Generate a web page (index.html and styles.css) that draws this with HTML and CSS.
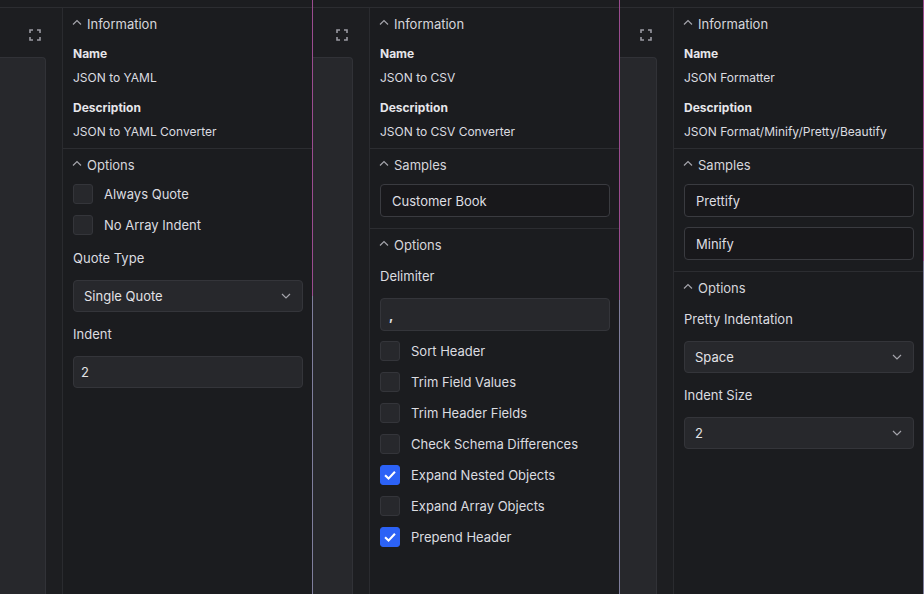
FILE: index.html
```html
<!DOCTYPE html>
<html lang="en">
<head>
<meta charset="utf-8">
<title>Tools</title>
<link rel="stylesheet" href="styles.css">
</head>
<body>
<div class="app">

  <!-- Panel 1: JSON to YAML -->
  <section class="panel panel-a">
    <div class="panel-main">
      <div class="strip"></div>
      <div class="panel-body">
        <div class="workspace">
          <div class="toolbar">
            <svg class="expand" viewBox="0 0 12 12"><path d="M1 4V1H4M8 1H11V4M11 8V11H8M4 11H1V8"/></svg>
          </div>
          <div class="editor"></div>
        </div>
        <aside class="sidebar">
          <div class="section info">
            <div class="section-head"><svg class="caret" viewBox="0 0 10 10"><path d="M1 6.5L5 2.5L9 6.5"/></svg><span>Information</span></div>
            <div class="info-list">
              <div class="info-item"><div class="info-label">Name</div><div class="info-value">JSON to YAML</div></div>
              <div class="info-item"><div class="info-label">Description</div><div class="info-value">JSON to YAML Converter</div></div>
            </div>
          </div>
          <div class="section">
            <div class="section-head"><svg class="caret" viewBox="0 0 10 10"><path d="M1 6.5L5 2.5L9 6.5"/></svg><span>Options</span></div>
            <div class="options">
              <label class="check"><span class="box"></span><span>Always Quote</span></label>
              <label class="check"><span class="box"></span><span>No Array Indent</span></label>
              <div class="field-label">Quote Type</div>
              <div class="select"><span>Single Quote</span><svg class="chev" viewBox="0 0 10 6"><path d="M1 1L5 5L9 1"/></svg></div>
              <div class="field-label">Indent</div>
              <div class="input">2</div>
            </div>
          </div>
        </aside>
      </div>
    </div>
    <div class="scroll" style="--thumb: 296px"></div>
  </section>

  <!-- Panel 2: JSON to CSV -->
  <section class="panel panel-b">
    <div class="panel-main">
      <div class="strip"></div>
      <div class="panel-body">
        <div class="workspace">
          <div class="toolbar">
            <svg class="expand" viewBox="0 0 12 12"><path d="M1 4V1H4M8 1H11V4M11 8V11H8M4 11H1V8"/></svg>
          </div>
          <div class="editor"></div>
        </div>
        <aside class="sidebar">
          <div class="section info">
            <div class="section-head"><svg class="caret" viewBox="0 0 10 10"><path d="M1 6.5L5 2.5L9 6.5"/></svg><span>Information</span></div>
            <div class="info-list">
              <div class="info-item"><div class="info-label">Name</div><div class="info-value">JSON to CSV</div></div>
              <div class="info-item"><div class="info-label">Description</div><div class="info-value">JSON to CSV Converter</div></div>
            </div>
          </div>
          <div class="section">
            <div class="section-head"><svg class="caret" viewBox="0 0 10 10"><path d="M1 6.5L5 2.5L9 6.5"/></svg><span>Samples</span></div>
            <div class="samples">
              <button class="sample">Customer Book</button>
            </div>
          </div>
          <div class="section">
            <div class="section-head"><svg class="caret" viewBox="0 0 10 10"><path d="M1 6.5L5 2.5L9 6.5"/></svg><span>Options</span></div>
            <div class="options">
              <div class="field-label">Delimiter</div>
              <div class="input input-delim">,</div>
              <label class="check"><span class="box"></span><span>Sort Header</span></label>
              <label class="check"><span class="box"></span><span>Trim Field Values</span></label>
              <label class="check"><span class="box"></span><span>Trim Header Fields</span></label>
              <label class="check"><span class="box"></span><span>Check Schema Differences</span></label>
              <label class="check"><span class="box on"><svg viewBox="0 0 12 12"><path d="M2.3 6.2L4.9 8.7L9.7 3.5"/></svg></span><span>Expand Nested Objects</span></label>
              <label class="check"><span class="box"></span><span>Expand Array Objects</span></label>
              <label class="check"><span class="box on"><svg viewBox="0 0 12 12"><path d="M2.3 6.2L4.9 8.7L9.7 3.5"/></svg></span><span>Prepend Header</span></label>
            </div>
          </div>
        </aside>
      </div>
    </div>
    <div class="scroll" style="--thumb: 300px"></div>
  </section>

  <!-- Panel 3: JSON Formatter -->
  <section class="panel panel-c">
    <div class="panel-main">
      <div class="strip"></div>
      <div class="panel-body">
        <div class="workspace">
          <div class="toolbar">
            <svg class="expand" viewBox="0 0 12 12"><path d="M1 4V1H4M8 1H11V4M11 8V11H8M4 11H1V8"/></svg>
          </div>
          <div class="editor"></div>
        </div>
        <aside class="sidebar">
          <div class="section info">
            <div class="section-head"><svg class="caret" viewBox="0 0 10 10"><path d="M1 6.5L5 2.5L9 6.5"/></svg><span>Information</span></div>
            <div class="info-list">
              <div class="info-item"><div class="info-label">Name</div><div class="info-value">JSON Formatter</div></div>
              <div class="info-item"><div class="info-label">Description</div><div class="info-value">JSON Format/Minify/Pretty/Beautify</div></div>
            </div>
          </div>
          <div class="section">
            <div class="section-head"><svg class="caret" viewBox="0 0 10 10"><path d="M1 6.5L5 2.5L9 6.5"/></svg><span>Samples</span></div>
            <div class="samples">
              <button class="sample">Prettify</button>
              <button class="sample">Minify</button>
            </div>
          </div>
          <div class="section">
            <div class="section-head"><svg class="caret" viewBox="0 0 10 10"><path d="M1 6.5L5 2.5L9 6.5"/></svg><span>Options</span></div>
            <div class="options">
              <div class="field-label">Pretty Indentation</div>
              <div class="select"><span>Space</span><svg class="chev" viewBox="0 0 10 6"><path d="M1 1L5 5L9 1"/></svg></div>
              <div class="field-label">Indent Size</div>
              <div class="select"><span>2</span><svg class="chev" viewBox="0 0 10 6"><path d="M1 1L5 5L9 1"/></svg></div>
            </div>
          </div>
        </aside>
      </div>
    </div>
    <div class="scroll" style="--thumb: 261px"></div>
  </section>

</div>
</body>
</html>
```

FILE: styles.css
```css
* { box-sizing: border-box; }

html, body {
  margin: 0;
  padding: 0;
  height: 100%;
  background: #1b1c1f;
}

body {
  font-family: Inter, "Liberation Sans", sans-serif;
  color: #d9d9de;
  overflow: hidden;
}

.app {
  display: flex;
  width: 924px;
  height: 594px;
}

.panel {
  display: flex;
  height: 100%;
  flex: none;
}
.panel-a { width: 313px; }
.panel-b { width: 307px; }
.panel-c { width: 304px; }

.panel-main {
  flex: 1;
  min-width: 0;
  display: flex;
  flex-direction: column;
}

.strip {
  height: 8px;
  flex: none;
  background: #1c1d20;
  border-bottom: 1px solid #2c2d31;
}

.panel-body {
  flex: 1;
  display: flex;
  min-height: 0;
}

.workspace {
  flex: 1;
  min-width: 0;
  display: flex;
  flex-direction: column;
  padding-right: 16px;
  background: #1d1e21;
}

.toolbar {
  height: 49px;
  flex: none;
  display: flex;
  justify-content: flex-end;
  padding: 21px 5px 0 0;
}

.expand {
  width: 12px;
  height: 12px;
  fill: none;
  stroke: #9a9aa2;
  stroke-width: 1.6;
}

.editor {
  flex: 1;
  background: #27282c;
  border-top: 1px solid #313237;
  border-right: 1px solid #313237;
  border-radius: 0 4px 0 0;
}

.sidebar {
  width: 250px;
  flex: none;
  border-left: 1px solid #2a2b2f;
  background: #1b1c1f;
  display: flex;
  flex-direction: column;
}

.scroll {
  width: 1px;
  flex: none;
  background: linear-gradient(to bottom, #9a4c8f 0, #9a4c8f var(--thumb), #7f7e9c var(--thumb), #7f7e9c 100%);
}

.section {
  padding: 6px 9px 11px 10px;
  border-bottom: 1px solid #2c2d31;
}
.section:last-child { border-bottom: none; }
.section.info { padding-bottom: 5px; }

.section-head {
  display: flex;
  align-items: center;
  height: 20px;
  margin-bottom: 9px;
  font-size: 13px;
  color: #d6d6db;
}
.caret {
  width: 10px;
  height: 10px;
  margin: -2px 5px 0 -1px;
  fill: none;
  stroke: #a4a4ab;
  stroke-width: 1.2;
}

.info-list {
  display: flex;
  flex-direction: column;
  gap: 8px;
}
.info-label {
  font-size: 12px;
  font-weight: 700;
  line-height: 22px;
  color: #e6e6ea;
}
.info-value {
  font-size: 12px;
  line-height: 22px;
  margin-top: 2px;
  color: #dcdce0;
}

.samples {
  display: flex;
  flex-direction: column;
  gap: 10px;
}
.sample {
  height: 33px;
  text-align: left;
  padding: 0 11px;
  font: inherit;
  font-size: 13px;
  color: #dedee2;
  background: #18181b;
  border: 1px solid #3a3b40;
  border-radius: 4px;
}

.options {
  display: flex;
  flex-direction: column;
  gap: 10px;
}

.check {
  display: flex;
  align-items: flex-start;
  height: 21px;
  font-size: 13px;
  color: #dcdce0;
  line-height: 21px;
}
.box {
  width: 20px;
  height: 20px;
  flex: none;
  margin-right: 11px;
  background: #27282c;
  border: 1px solid #34353a;
  border-radius: 3px;
  display: flex;
  align-items: center;
  justify-content: center;
}
.box.on {
  background: #2c62f6;
  border-color: #2c62f6;
}
.box svg {
  width: 16px;
  height: 16px;
  fill: none;
  stroke: #ffffff;
  stroke-width: 1.6;
}

.field-label {
  font-size: 13px;
  line-height: 24px;
  color: #dcdce0;
}

.select, .input {
  height: 32px;
  display: flex;
  align-items: center;
  background: #27282c;
  border: 1px solid #34353a;
  border-radius: 4px;
  font-size: 13px;
  color: #e2e2e6;
}
.input-delim { height: 33px; }
.select {
  justify-content: space-between;
  padding: 0 11px 0 10px;
}
.input { padding: 0 7px; }
.input-delim { padding: 0 8px; font-weight: 700; }

.chev {
  width: 10px;
  height: 6px;
  fill: none;
  stroke: #a4a4ab;
  stroke-width: 1.2;
}
```
